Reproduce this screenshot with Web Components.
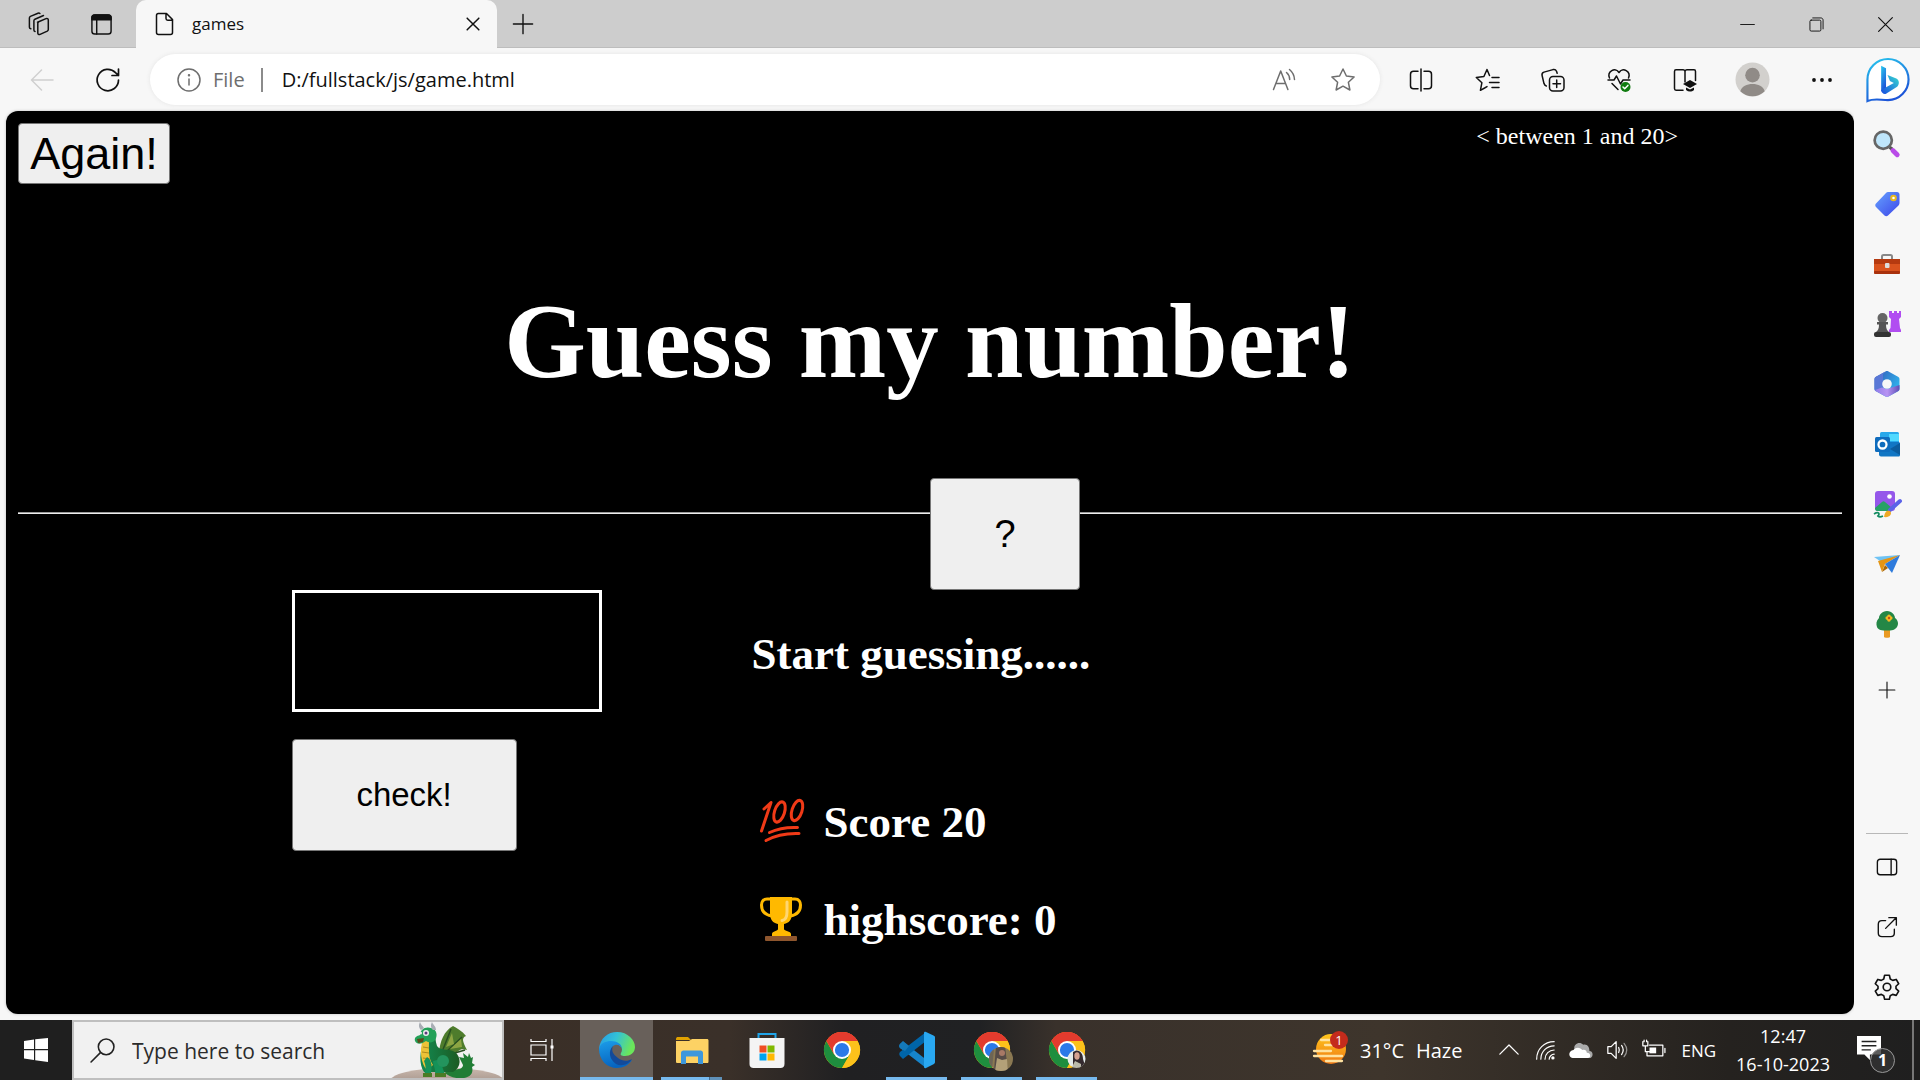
<!DOCTYPE html>
<html lang="en">
<head>
<meta charset="utf-8">
<title>games</title>
<style>
html, body { margin: 0; height: 100%; }
body { font-family: "Open Sans", "Noto Sans", sans-serif; background: #f7f7f7; color: #111; }
</style>
</head>
<body>
<desktop-screen></desktop-screen>
<script>
const line = (body, extra = '') => `<svg viewBox="0 0 24 24" fill="none" stroke="currentColor" stroke-width="1.5" stroke-linecap="round" stroke-linejoin="round" ${extra}>${body}</svg>`;
const art = (body, box = '0 0 36 36') => `<svg viewBox="${box}">${body}</svg>`;

const chrome = `
  <circle cx="18" cy="18" r="18" fill="#fbbc04"/>
  <path d="M18 18 2.4 9A18 18 0 0 1 33.6 9Z" fill="#e33b2e"/>
  <path d="M2.4 9A18 18 0 0 0 18 36L25.8 22.5 10.2 22.5Z" fill="#1e8e3e"/>
  <path d="M18 9H33.6A18 18 0 0 1 18 36L25.8 22.5Z" fill="#fcc21b"/>
  <path d="M2.4 9A18 18 0 0 1 33.6 9H18L10.2 22.5Z" fill="#e33b2e"/>
  <circle cx="18" cy="18" r="9" fill="#fff"/><circle cx="18" cy="18" r="7.1" fill="#2b79e8"/>`;

const ICONS = {
  workspaces: line('<path d="M10.5 10.2 19 6.600c1-.4 2.300.1 2.300 1.400v9.500c0 .7-.4 1.300-1 1.600l-7.200 3.300c-1.200.5-2.300-.2-2.300-1.400v-9.500c0-.6.2-1 .7-1.300M8 19.500c-.7-.1-1.100-.7-1.100-1.400V8.800c0-.7.4-1.300 1-1.600L16.500 3.500M3.800 16.800C3 16.600 2.400 16 2.400 15.200V6c0-.7.4-1.300 1-1.600L11 1.200c.7-.3 1.400-.2 1.900.3"/>'),
  tabs: line('<rect x="2" y="2" width="20" height="20" rx="3"/><path d="M2 5c0-2 1-3 3-3h14c2 0 3 1 3 3v2H2z" fill="currentColor"/><path d="M7 7v15"/>'),
  page: line('<path d="M5 1.500h8.500l6 6v13c0 1-.8 2-2 2h-12c-1 0-2-.8-2-2v-17c0-1.200.8-2 2-2M13 1.500v5c0 1 .7 1.700 1.700 1.700h5"/>'),
  close: line('<path d="m5 5 14 14m0-14-14 14" stroke-width="1.800"/>'),
  plus: line('<path d="M12 1.500v21M1.500 12h21"/>'),
  back: line('<path d="M23 12H1.500M11.500 2 1.500 12l10 10"/>'),
  reload: line('<path d="M22.500 12A10.700 10.700 0 1 1 19.500 4.600L22.500 7.500M22.500 1v6.500h-6.500" stroke-width="1.7"/>'),
  info: line('<circle cx="12" cy="12" r="11"/><path d="M12 11v6"/><circle cx="12" cy="7.300" r=".5" fill="currentColor"/>'),
  aloud: line('<path d="M1.500 21.500 8.700 3l7.200 18.500M4 15.500h9.500M14.500 4.500a9 9 0 0 1 3.200 7M17.500 1.500a14 14 0 0 1 5 10"/>'),
  star: line('<path d="m12 1 3.400 7 7.700 1-5.700 5.300 1.500 7.700-6.900-3.800L5.100 22l1.500-7.700L.9 9l7.700-1z"/>'),
  split: line('<path d="M12 1v22M9 3.200H4.500c-1.700 0-3 1.300-3 3v11.600c0 1.700 1.300 3 3 3H9M15 3.200h4.500c1.700 0 3 1.300 3 3v11.600c0 1.700-1.300 3-3 3H15"/>'),
  favs: line('<path d="M14.500 7.500 12 1.500 8.900 8.500 1.300 9.500l5.600 5.200-1.500 7.600 4.200-2.300 2.400-1.400M17 9.500h7M14.500 14.500H24M17 19.500h7"/>'),
  collections: line('<rect x="8.500" y="8.500" width="14.500" height="14.500" rx="3.500"/><path d="M15.700 12v7.500M12 15.700h7.500M5.300 18C4 17.700 3.400 16.800 3 15.600L1.100 7.500C.7 5.800 1.600 4.500 3 4.100L12 1.600c1.600-.4 2.900.3 3.500 1.600l.7 2"/>'),
  heart: line('<path d="M2.500 10C-.2 3.500 8.200-1.500 12 4.500 15.800-1.500 24.200 3.500 21.500 10M1 12h6l2.500-4 4 8 2.500-4h7M5 15.500l6 6"/><circle cx="18.500" cy="19" r="5" fill="#107c10" stroke="none"/><path d="m16 19 1.700 1.700 3.200-3.300" stroke="#fff"/>'),
  reading: line('<path d="M12 3.500c0-1-.8-1.700-2-1.700H3C2 1.800 1.500 2.500 1.500 3.500v17c0 1 .5 1.700 1.500 1.700h7M12 3.500c0-1 .8-1.700 2-1.700h7c1 0 1.500.7 1.500 1.700v9M12 3.500V14"/><path d="m10 16 7-4 7 4-7 4zM13 19.500v2.500c2.500 2 5.500 2 8 0v-2.500l-4 2z" fill="currentColor" stroke="none"/>'),
  avatar: art('<circle cx="18" cy="18" r="17.500" fill="#d2d0cd"/><circle cx="18" cy="13.500" r="7.500" fill="#908b87"/><path d="M5.500 30C8 20 28 20 30.500 30A17.500 17.500 0 0 1 5.500 30" fill="#908b87"/>'),
  dots: art('<g fill="currentColor"><circle cx="4" cy="12" r="1.900"/><circle cx="12" cy="12" r="1.900"/><circle cx="20" cy="12" r="1.900"/></g>', '0 0 24 24'),
  bing: art('<defs><linearGradient id="a" x1="0" y1="0" x2=".4" y2="1"><stop stop-color="#28c8ee"/><stop offset="1" stop-color="#1c55d8"/></linearGradient><linearGradient id="b" x1="0" y1="1" x2="1" y2="0"><stop stop-color="#174be0"/><stop offset="1" stop-color="#38dcd0"/></linearGradient></defs><path d="M2 45V23A21 21 0 1 1 23 44C15 44 9 42 2 45Z" fill="#fff" stroke="url(#a)" stroke-width="2.200"/><path d="m16 9 5 2.500v21L16 35z" fill="url(#a)"/><path d="m21 31 8-4.500-4-2-2.500-6 9 3.500c3.500 1.500 3.500 7 0 9L21 37.500c-2 1-5-1-5-3.500z" fill="url(#b)"/>', '0 0 46 47'),
  minimise: line('<path d="M1 12h22"/>'),
  restore: line('<rect x="1.500" y="5" width="17.500" height="17.500" rx="2"/><path d="M6 1.500h13c2 0 3.500 1.500 3.500 3.500v14"/>'),
  quit: line('<path d="m1 1 22 22m0-22L1 23" stroke-width="1.900"/>'),
  search: art('<circle cx="10.500" cy="10.500" r="8" fill="#bfe6fb" stroke="#666" stroke-width="2.500"/><path d="m16.500 17 2.500 2" stroke="#555" stroke-width="3"/><path d="m19.500 20 4 4" stroke="#b94be8" stroke-width="4.500" stroke-linecap="round"/>', '1 1 26 26'),
  tag: art('<defs><linearGradient id="a" x2="1" y2="1"><stop stop-color="#66a2ff"/><stop offset="1" stop-color="#3c45e8"/></linearGradient></defs><path d="M15 2h9c1.500 0 2.500 1 2.500 2.500V13c0 1-.3 1.700-1 2.400L15 25.500c-1 1-2.500 1-3.500 0L3 17c-1-1-1-2.500 0-3.500L13 3c.5-.6 1.200-1 2-1" fill="url(#a)"/><circle cx="20.500" cy="8" r="2.300" fill="#fff" stroke="#e9b91f" stroke-width="2"/>', '0 0 28 28'),
  toolbox: art('<path d="M9 8V5.500C9 4.500 9.700 4 10.500 4h7c1 0 1.500.6 1.500 1.500V8" fill="none" stroke="#888" stroke-width="2"/><rect x="1" y="8" width="26" height="15" rx="2" fill="#d9531e"/><path d="M1 8h26v5H1z" fill="#b53a10"/><rect x="1" y="20" width="26" height="3" rx="1" fill="#a9310d"/><rect x="12" y="12" width="4.500" height="5" rx="1" fill="#ddd"/>', '0 -1 28 28'),
  chess: art('<path d="M16 1h3v2h2V1h3v2h2V1h2v6l-2 2 1 9 1 2v2H16v-2l1.500-2L18 9l-2-2z" fill="#b14df1"/><circle cx="9.500" cy="8" r="5" fill="#666"/><path d="M4 12h11v2.500h-2c0 4 1 6 3 7.500H3c2-1.500 3-3.500 3-7.500H4z" fill="#555"/><rect x="1" y="22" width="17" height="5" rx="2" fill="#333"/>', '0 0 28 28'),
  office: art('<defs><linearGradient id="a" x2="1" y2=".6"><stop stop-color="#3656b5"/><stop offset="1" stop-color="#2eb5ee"/></linearGradient><linearGradient id="b" x2="1"><stop stop-color="#8f7ce8"/><stop offset=".5" stop-color="#b893f3"/><stop offset="1" stop-color="#5d4fb7"/></linearGradient></defs><path d="M12.500 1.500c1-.6 2-.6 3 0l9.500 5.200c1 .6 1.500 1.400 1.500 2.500v9.600c0 1.100-.5 2-1.500 2.500l-9.500 5.200c-1 .6-2 .6-3 0L3 21.300c-1-.6-1.500-1.400-1.500-2.500V9.200C1.500 8.100 2 7.300 3 6.700z" fill="url(#a)"/><path d="M12.500 1.500 10 4v14l-7 3.300c-1-.6-1.500-1.400-1.500-2.500V9.200C1.500 8.100 2 7.300 3 6.700z" fill="#5a78d6"/><path d="m2 20 7-2.500 5 1.500 12.500-4v3.800c0 1.100-.5 2-1.500 2.500l-9.500 5.200c-1 .6-2 .6-3 0L3 21.300z" fill="url(#b)"/><circle cx="14" cy="14" r="4.800" fill="#f7f7f7"/>', '0 0 28 28'),
  outlook: art('<rect x="7" y="2" width="19" height="15" rx="1.500" fill="#28a8ea"/><path d="M16 4h10v7H16z" fill="#50d9ff"/><path d="M6 12h20l1 1v12c0 1-.7 1.500-1.500 1.500H8c-1 0-2-.8-2-2z" fill="#1176c4"/><path d="m27 13-10 6 10 6z" fill="#0b5c9e"/><rect x="2" y="7" width="15" height="15" rx="1.500" fill="#0f6cbd"/><circle cx="9.500" cy="14.500" r="4" fill="none" stroke="#fff" stroke-width="2.300"/>', '0 0 28 28'),
  paint: art('<rect x="2" y="1" width="20" height="20" rx="3" fill="#9557ea"/><path d="m2 18 7-6c1-1 2-1 3 0l7 6v3H4c-1 0-2-1-2-3" fill="#27a266"/><circle cx="16.500" cy="6.500" r="2.300" fill="#fff"/><path d="m17 20 10-9" stroke="#5b62e8" stroke-width="4" stroke-linecap="round"/><path d="M11 27c1-6 3-7 6-6 3 3-1 7-6 6" fill="#efaa26"/><path d="M1 24c5-3 6 0 4 2 1 1 3 1 5 0" fill="none" stroke="#158c62" stroke-width="1.800"/>', '0 0 28 28'),
  plane: art('<path d="m1 7 26-2-17 8z" fill="#6fc3f4"/><path d="m5 11 22-6-15 9-3 8z" fill="#e59514"/><path d="m12 14 15-9-8 18z" fill="#2e7bdc"/><path d="m9 22 3-7 3 3z" fill="#a96604"/>', '0 0 28 28'),
  tree: art('<path d="M11 18h6v9c0 1-6 1-6 0z" fill="#e99a23"/><path d="M14 1c5 0 8 4 8 7 3 2 4 6 2 9s-5 3.500-10 3.500S5 20 4 17s-1-6 2-9c0-3 3-7 8-7" fill="#248746"/><path d="M16 4.500a1.800 1.800 0 0 1 1.800 1.800 1.800 1.800 0 1 1 0 3.600 1.800 1.800 0 1 1-3.600 0 1.800 1.800 0 1 1 0-3.600 1.800 1.800 0 0 1 1.800-1.800" fill="#f4b925"/><circle cx="16" cy="8" r="1.200" fill="#c45213"/>', '0 0 28 28'),
  panel: line('<rect x="1.500" y="3.500" width="21" height="17" rx="3"/><path d="M16.500 3.500v17"/>'),
  share: line('<path d="M10.500 5H6.500C4 5 2.500 6.500 2.500 9v9.500C2.500 21 4 22.500 6.500 22.500H16c2.500 0 4-1.500 4-4V14.500M10.500 13.500 22 2M14 1.800h8.200V10"/>'),
  gear: line('<circle cx="12" cy="12" r="3.500"/><path d="m9.800 1.200-.8 3.400-2.300 1.300L3.500 5 1.200 9l2.500 2.300v2.200L1.200 15.800l2.300 3.900 3.300-.9 2.200 1.200.8 3.300h4.400l.8-3.300 2.200-1.200 3.300.9 2.300-3.900-2.500-2.300v-2.200L22.800 9l-2.300-4-3.200.9L15 4.600l-.8-3.400z"/>'),
  hundred: art('<g fill="none" stroke="#f03a17" stroke-width="3" stroke-linecap="round" stroke-linejoin="round"><path d="M1.500 32 11 3.500 4 10"/><ellipse cx="19.500" cy="13" rx="5" ry="10.500" transform="rotate(18 19.500 13)"/><ellipse cx="37" cy="11.500" rx="5" ry="10.500" transform="rotate(18 37 11.500)"/><path d="M9.500 33.500C18 29.500 26 28 37.500 28.500M6 41.500c9-5 19-7.500 33-7"/></g>', '0 0 46 46'),
  trophy: art('<path d="M11 4H7C3 4 1.500 7 1.500 10c0 6 3.500 10 10.500 11M31 4h4c4 0 5.500 3 5.500 6 0 6-3.500 10-10.500 11" fill="none" stroke="#ffb900" stroke-width="3"/><path d="M10 2h22v16c0 7-3 10-8 11v5c0 2 7 2 7 5v3H12v-3c0-3 6-3 6-5v-5c-5-1-8-4-8-11z" fill="#ffb900"/><path d="M27 7v10c0 5-1 8-5 8.500" fill="none" stroke="#ffd670" stroke-width="3" stroke-linecap="round"/><rect x="5" y="41" width="32" height="5" rx="1" fill="#8e562e"/>', '0 2 46 46'),
  windows: art('<path d="m0 3 10-1.500V11H0zM11.200 1.300 24 0v11H11.200zM0 12.200h10V22L0 20.500zM11.200 12.200H24V24l-12.800-1.700z" fill="#fff"/>', '0 0 24 24'),
  find: line('<circle cx="15.500" cy="8.500" r="7.500"/><path d="M10 14 1 23"/>'),
  taskview: line('<path d="M1 1v2.500h15V1M1 23v-2.500h15V23M1 7h15v10H1zM22 1v22" stroke-width="1.200" stroke-linecap="butt" stroke-linejoin="miter"/><path d="M20.500 7.500h3v3h-3z" fill="currentColor" stroke="none"/>'),
  edge: art('<defs><linearGradient id="a" x2="1" y2=".3"><stop stop-color="#2599e6"/><stop offset=".5" stop-color="#32c2d8"/><stop offset="1" stop-color="#6be65b"/></linearGradient><linearGradient id="b" x2=".3" y2="1"><stop stop-color="#1c9de9"/><stop offset="1" stop-color="#0664c0"/></linearGradient></defs><path d="M0 17C1 6 9 0 18 0c11 0 18 8 18 15 0 6-5 9-10 9-4 0-5-1-4-3 3-5-1-9-6-9-7 0-12 2-16 5" fill="url(#a)"/><path d="M0 17C1 11 7 9 12 9c6 0 11 3 11 8-1-3-4-5-7-4-6 2-6 12 3 16 5 2 9 2 14-1-3 5-9 8-15 8C8 36 0 28 0 17" fill="url(#b)"/><path d="M14 14c-5 5-4 13 3 18 6 3 13 0 16-5-5 3-10 2-14-1-5-4-7-7-5-12" fill="#134a9a"/>'),
  explorer: art('<path d="M2 7c0-1.500 1-2 2-2h10l3 3H2z" fill="#e0a100"/><path d="M2 9h13l3-2h15c1 0 1.500.7 1.500 1.500v21c0 1-.5 1.500-1.500 1.500H3.500C2.500 31 2 30.500 2 29.500z" fill="#fdd264"/><path d="M7 32V21c0-1.500 1-2.500 2.500-2.500h17c1.500 0 2.500 1 2.500 2.500v11h-5v-7.500H12V32z" fill="#3c97dc"/>'),
  store: art('<path d="M9.500 10V2h17v8" fill="none" stroke="#20a4e8" stroke-width="2"/><path d="M.5 6h35v26c0 2.500-1.500 4-4 4h-27c-2.500 0-4-1.500-4-4z" fill="#f4f4f4"/><path d="M10.500 13.500h7v7h-7z" fill="#f04e23"/><path d="M18.500 13.500h7v7h-7z" fill="#80b900"/><path d="M10.500 21.500h7v7h-7z" fill="#00a3ee"/><path d="M18.500 21.500h7v7h-7z" fill="#ffb800"/>'),
  chrome: art(chrome),
  chromea: art(chrome + '<defs><clipPath id="c"><circle cx="27" cy="27" r="12"/></clipPath></defs><g clip-path="url(#c)"><path d="M14 14h26v26H14z" fill="#8a7852"/><path d="M22 14h9l3 25H20z" fill="#574c47"/><path d="m23 26 5 2 5-1 1 12H21z" fill="#b3a078"/><circle cx="28" cy="21" r="3" fill="#a87966"/><path d="M14 17h6l-2 20h-4z" fill="#6d6555"/></g>'),
  chromeb: art(chrome + '<defs><clipPath id="c"><circle cx="27.500" cy="27" r="9"/></clipPath></defs><g clip-path="url(#c)"><path d="M18 17h20v20H18z" fill="#e4ebea"/><path d="M24 20c5-4 10 0 10 7l3 10H24z" fill="#342a2e"/><ellipse cx="28" cy="24" rx="2.700" ry="3.700" fill="#d6a290"/><path d="m22 37 4-8 6 3v5z" fill="#bba"/></g>'),
  vscode: art('<path d="m1 12 3-2.500 23 18V36L1 16c-1-1-1-3 0-4" fill="#1685cc"/><path d="m1 24 3 3L27 9V0L1 20c-1 1-1 3 0 4" fill="#0065a9"/><path d="m1 12 3-3 6 5-4 5-5-3c-1-1-1-3 0-4" fill="#1479b9"/><path d="m27 0 7.500 3.500c1 .5 1.500 1 1.500 2V30c0 1-.5 1.800-1.500 2.300L27 36c-1 .5-2 0-2-1V1c0-1 1-1.500 2-1" fill="#29a8f1"/>'),
  weather: art('<defs><linearGradient id="a" x2="0" y2="1"><stop stop-color="#ffc61b"/><stop offset="1" stop-color="#f07815"/></linearGradient></defs><circle cx="19" cy="17" r="15" fill="url(#a)"/><g stroke="#ffe2a0" stroke-width="2.300" stroke-linecap="round"><path d="M9 8h10M13 13h8M2 19h17M8 24h22M2 24h5M14 29h16"/></g>'),
  caret: line('<path d="m1 17 11-11 11 11"/>'),
  wifi: line('<g stroke-width="1.400"><path d="M2 23C2 11 11 2 23 2M7 23C7 14 14 7 23 7M12 23c0-6 5-11 11-11M17 23c0-3 3-6 6-6"/></g><circle cx="21.500" cy="21.500" r="2" fill="currentColor" stroke="none"/>'),
  cloud: art('<path d="M6 11C5 5 12 2 16 6c5-1 7 3 7 7 4 0 5 6 1 8H6z" fill="#aaa"/><path d="M4 21c-5-1-5-8 1-9 3-4 8-3 10 0 4-1 5 2 5 3 5 0 5 6 1 6z" fill="#fff"/>', '0 0 27 24'),
  volume: line('<path d="M1 8h4l6-6v20l-6-6H1zM14 9c1 2 1 4 0 6M17.500 6.500c2.500 3.500 2.500 7.500 0 11"/><path d="M20.500 4c4 5 4 11 0 16" opacity=".5"/>'),
  battery: line('<path d="M9 6h16v13H6v-5M27.500 10v5M1 2v5h6V2M4 7v7h5M2.500 2V0M5.500 2V0"/><path d="M9 9h8v7H9z" fill="currentColor" stroke="none"/>', 'style="translate:-1px 0"'),
  message: art('<path d="M0 0h26v20H14v6l-6-6H0z" fill="#fff"/><path d="M5 6h16M5 10.500h16M5 15h10" stroke="#222" stroke-width="1.500"/>', '0 0 26 26'),
  dragon: art(`<defs><linearGradient id="r" x2="0" y2="1"><stop stop-color="#c9b8ad"/><stop offset="1" stop-color="#89786f"/></linearGradient><linearGradient id="g" x2="1"><stop stop-color="#128a52"/><stop offset="1" stop-color="#1c5b22"/></linearGradient></defs>
    <ellipse cx="55" cy="60" rx="58" ry="14" fill="url(#r)"/>
    <path d="M56 46c9 3 15 1 15-3l-4-8 5 1-1-5 5 4 1-4 2 5 2-1-1 6 3 2-3 2c2 7-3 11-10 11-7 1-14-2-17-5z" fill="#207d35"/>
    <path d="M47 31c1-12 5-22 14-27 4 2 9 5 13 10-5 2-3 6 1 14-6-2-10 0-13 8z" fill="#4e7c2c"/>
    <path d="m50 30 9-23M53 31l17-16M56 33l17-5" stroke="#284f21" stroke-width="1.500"/>
    <path d="m54 25 6-14 2 11zM58 27l11-10 1 8z" fill="#8da543"/>
    <path d="M33 18c-6 10-6 25-1 32h29c9-5 8-15 2-20-7-4-15-1-18-6-2-5-1-10-3-14z" fill="url(#g)"/>
    <path d="M31 18c-4 10-2 24 4 30l6-5c-5-7-4-16-4-25z" fill="#ecc237"/>
    <path d="m31 25 6 1m-7 4 7 1m-6 5 7 1m-4 5 6 1" stroke="#af8b1e"/>
    <path d="M23 19c-1-4 2-5 5-6 0-5 5-9 11-7 6 1 7 8 4 12-3 4-7 2-9 1-4 3-9 4-11 0" fill="#23a158"/>
    <path d="M29 8c-3-3-2-6-1-8 1 3 3 4 4 6M41 8c-3-3-2-6-1-8 1 3 4 4 4 8" fill="#a8adb4"/>
    <path d="m25 17 7-1-1 4-5 1z" fill="#5b4b1a"/><circle cx="34" cy="11" r="3" fill="#eee"/><circle cx="34" cy="11" r="1.500" fill="#5b367b"/><circle cx="28.500" cy="11" r="1.500" fill="#eee"/>
    <path d="M35 35c5 3 5 9 4 17h-7c3-5 1-10 0-13M45 38c5 1 5 8 8 14H43c1-4-2-9-2-13" fill="#159258"/>
    <path d="M31 51h9v4h-9zM43 51h11v4H43z" fill="#497c25"/><circle cx="51" cy="39" r="6" fill="#23945d"/>`, '0 0 110 56')
};

class Element extends HTMLElement {
  connectedCallback() {
    if (this.shadowRoot) return;
    const t = document.createElement('template');
    t.innerHTML = `<style>
      *, ::before, ::after { box-sizing: border-box; }
      button { font: inherit; color: inherit; background: none; border: 0; padding: 0; margin: 0; display: flex; align-items: center; justify-content: center; flex: none; }
      ${this.css()}</style>${this.html()}`;
    this.attachShadow({ mode: 'open' }).append(t.content.cloneNode(true));
  }
  css() { return ':host{display:block}'; }
  html() { return '<slot></slot>'; }
}
const define = (name, css, html) => customElements.define(name, class extends Element {
  css() { return css; }
  html() { return typeof html === 'function' ? html(this) : html; }
});
const btn = (label, icon, cls = '') => `<button aria-label="${label}" class="${cls}"><ui-icon name="${icon}"></ui-icon></button>`;

define('ui-icon',
  ':host{display:block;flex:none;width:var(--size,24px);height:var(--size,24px)} svg{display:block;width:100%;height:100%;overflow:visible}',
  el => ICONS[el.getAttribute('name')]);

define('tab-strip', `
  :host { display: flex; height: 48px; background: #cdcdcd; box-shadow: inset 0 -1px #bdbdbd; }
  .lead { display: flex; width: 136px; padding-left: 7px; }
  .lead button { width: 63px; }
  .tab { display: flex; align-items: center; width: 361px; padding: 0 10px 0 17px; background: #f7f7f7; border-radius: 10px 10px 0 0; font-size: 17px; }
  .tab span { flex: 1; padding: 0 0 2px 15px; }
  .tab button { width: 28px; height: 28px; --size: 20px; }
  .new { width: 51px; --size: 22px; }
  .window { display: flex; margin-left: auto; --size: 15px; }
  .window button { width: 69px; }
  .tabs { --size: 23px; }`,
  `<div class="lead">${btn('Workspaces', 'workspaces')}${btn('Tab actions', 'tabs', 'tabs')}</div>
  <div class="tab"><ui-icon name="page"></ui-icon><span>games</span>${btn('Close tab', 'close')}</div>
  ${btn('New tab', 'plus', 'new')}
  <div class="window">${btn('Minimise', 'minimise')}${btn('Restore', 'restore')}${btn('Close', 'quit')}</div>`);

define('address-bar', `
  :host { display: flex; align-items: center; height: 63px; background: #f7f7f7; }
  .nav { display: flex; width: 150px; padding-left: 9px; }
  .nav button { width: 66px; }
  .off { color: #cfcfcf; }
  .pill { flex: 1; display: flex; align-items: center; height: 51px; border-radius: 26px; background: #fff; box-shadow: 0 0 4px #e4e4e4; padding: 0 8px 0 27px; color: #6e6e6e; font-size: 20px; }
  .pill label { padding: 0 16px 0 12px; margin-right: 19px; line-height: 24px; border-right: 2px solid #8b8b8b; }
  input { flex: 1; min-width: 0; border: 0; padding: 0; outline: 0; background: none; font: inherit; color: #111; }
  .pill button { width: 59px; }
  .tools { display: flex; padding-left: 8px; }
  .tools button { width: 66px; }
  .tools .wide { width: 69px; }
  .avatar { --size: 35px; }
  .tools .bing { width: 64px; --size: 46px; }`,
  `<div class="nav">${btn('Back', 'back', 'off')}${btn('Reload', 'reload')}</div>
  <div class="pill"><ui-icon name="info"></ui-icon><label for="url">File</label><input id="url" value="D:/fullstack/js/game.html">
  ${btn('Read aloud', 'aloud')}${btn('Favourite', 'star')}</div>
  <div class="tools">${btn('Split screen', 'split')}${btn('Favourites', 'favs')}${btn('Collections', 'collections')}${btn('Browser essentials', 'heart')}${btn('Immersive reader', 'reading')}
  ${btn('Profile', 'avatar', 'wide avatar')}${btn('More', 'dots', 'wide')}${btn('Bing chat', 'bing', 'bing')}</div>`);

define('side-bar', `
  :host { display: flex; flex-direction: column; width: 66px; flex: none; padding-top: 3px; background: #f7f7f7; --size: 28px; }
  button { width: 66px; height: 60px; }
  .line { --size: 22px; }
  .add { height: 72px; --size: 18px; }
  hr { width: 42px; height: 1px; margin: auto auto 3px; border: 0; background: #b8b8b8; flex: none; }
  .last { --size: 26px; }`,
  `${[['Search', 'search'], ['Shopping', 'tag'], ['Tools', 'toolbox'], ['Games', 'chess'], ['Microsoft 365', 'office'], ['Outlook', 'outlook'], ['Image Creator', 'paint'], ['Drop', 'plane'], ['E-tree', 'tree']].map(a => btn(...a)).join('')}
  ${btn('Customise', 'plus', 'add')}<hr>${btn('Hide sidebar', 'panel', 'line')}${btn('Open link', 'share', 'line')}${btn('Settings', 'gear', 'last')}`);

define('push-button', `
  :host { display: block; }
  button { width: 100%; height: 100%; background: #efefef; border: 1px solid #767676; border-radius: 4px; color: #000; font-family: "Liberation Sans", sans-serif; }`,
  '<button><slot></slot></button>');

define('score-line', `
  :host { display: flex; align-items: center; height: 52px; padding-left: 8px; gap: 18px; --size: 46px; font: bold 45px/52px "Liberation Serif", serif; }`,
  el => `<ui-icon name="${el.getAttribute('icon')}"></ui-icon><slot></slot>`);

define('guess-game', `
  :host { display: block; flex: 1; min-width: 0; padding: 12px; background: #000; color: #fff; border-radius: 12px; font-family: "Liberation Serif", serif; box-shadow: 0 0 3px #bbb; }
  header { display: flex; justify-content: space-between; font-size: 24px; line-height: 27px; }
  header p { margin: 0 164px 0 0; }
  .again { width: 152px; height: 61px; font-size: 45px; }
  h1 { margin: 98px 0 110px; font-size: 105px; line-height: 120px; text-align: center; }
  hr { height: 2px; margin: 0; border: 0; background: linear-gradient(#9a9a9a 50%, #eee 50%); }
  .secret { position: relative; width: 150px; height: 112px; margin: -36px 0 0 50%; font-size: 38px; }
  .play { display: flex; padding-left: 15%; }
  form { display: flex; flex-direction: column; gap: 27px; width: 460px; }
  input { width: 310px; height: 122px; border: 3px solid #fff; border-radius: 0; padding: 0 20px; background: #000; color: #fff; font-size: 45px; outline: 0; }
  .check { width: 225px; height: 112px; font-size: 33px; }
  .status { padding-top: 38px; }
  .status p { margin: 0 0 116px; font: bold 45px/52px "Liberation Serif", serif; }
  score-line + score-line { margin-top: 46px; }`,
  `<header><push-button class="again">Again!</push-button><p>&lt; between 1 and 20&gt;</p></header>
  <h1>Guess my number!</h1><hr>
  <push-button class="secret">?</push-button>
  <div class="play"><form><input type="text" aria-label="Your guess"><push-button class="check">check!</push-button></form>
  <div class="status"><p>Start guessing......</p><score-line icon="hundred">Score 20</score-line><score-line icon="trophy">highscore: 0</score-line></div></div>`);

define('task-app', `
  :host { display: flex; width: 75px; justify-content: center; --size: 36px; }
  button { width: 61px; height: 60px; }
  :host([running]) button { border-bottom: 3px solid #76b9ed; padding-top: 3px; }
  :host([active]) button { width: 73px; background: #68605a; }
  :host([many]) button { border-image: linear-gradient(90deg, #76b9ed 77%, #426b8f 77% 80%, #5f91b9 80%) 1; }`,
  el => btn(el.getAttribute('label'), el.getAttribute('icon')));

define('task-bar', `
  :host { display: flex; height: 60px; flex: none; color: #fff; font-size: 20px;
    background: linear-gradient(90deg, #1f1f1f 0, #1f1f1f 4%, #3a2f27 26%, #3a3029 38%, #202022 44%, #202123 51%, #39312b 55%, #3e352c 72%, #25221f 90%, #1f1f1f 100%); }
  .start { width: 72px; }
  .search { display: flex; align-items: center; width: 432px; flex: none; padding-left: 16px; border: 2px solid #bfbfbf; background: #f1f1f1; color: #222; overflow: hidden; }
  .search ui-icon { --size: 25px; }
  .search .pic { width: 110px; height: 56px; }
  input { flex: 1; min-width: 0; border: 0; outline: 0; padding: 2px 0 0 17px; background: none; font: inherit; font-size: 21px; }
  input::placeholder { color: #2b2b2b; opacity: 1; }
  .view { width: 75px; --size: 24px; }
  .tray { display: flex; align-items: center; margin-left: auto; }
  .weather { gap: 12px; --size: 36px; position: relative; margin-right: 37px; }
  .weather i { position: absolute; left: 18px; top: -1px; width: 18px; height: 18px; border-radius: 50%; background: #c42b1c; font: 13px/18px "Open Sans", sans-serif; text-align: center; }
  .icons { display: flex; align-items: center; gap: 16px; --size: 20px; }
  .icons button:nth-child(3) { --size: 24px; margin: 0 -2px; }
  .lang { font-size: 17px; margin-left: 18px; }
  .clock { margin-left: 20px; text-align: center; font-size: 18px; line-height: 28px; display: block; }
  .note { position: relative; margin: 0 17px 0 27px; width: 38px; height: 44px; justify-content: flex-start; align-items: flex-start; padding-top: 8px; }
  .note b { position: absolute; left: 13px; top: 20px; width: 25px; height: 25px; border: 1px solid #999; border-radius: 50%; background: #333c; font-size: 16px; line-height: 23px; text-align: center; }
  .desk { width: 8px; height: 60px; border-left: 2px solid #777; }`,
  `${btn('Start', 'windows', 'start')}
  <div class="search"><ui-icon name="find"></ui-icon><input type="text" aria-label="Search" placeholder="Type here to search"><ui-icon class="pic" name="dragon"></ui-icon></div>
  ${btn('Task view', 'taskview', 'view')}
  <task-app label="Edge" icon="edge" running active></task-app><task-app label="File Explorer" icon="explorer" running many></task-app><task-app label="Store" icon="store"></task-app><task-app label="Chrome" icon="chrome"></task-app><task-app label="VS Code" icon="vscode" running></task-app><task-app label="Chrome profile 1" icon="chromea" running></task-app><task-app label="Chrome profile 2" icon="chromeb" running></task-app>
  <div class="tray"><button class="weather"><ui-icon name="weather"></ui-icon><i>1</i><span>31°C</span><span>Haze</span></button>
  <div class="icons">${btn('Hidden icons', 'caret')}${btn('Wi-Fi', 'wifi')}${btn('OneDrive', 'cloud')}${btn('Volume', 'volume')}${btn('Battery', 'battery')}</div>
  <button class="lang">ENG</button><button class="clock">12:47<br>16-10-2023</button>
  <button class="note" aria-label="Notifications"><ui-icon name="message"></ui-icon><b>1</b></button><button class="desk" aria-label="Show desktop"></button></div>`);

define('desktop-screen', `
  :host { display: flex; flex-direction: column; min-height: 100vh; background: #f7f7f7; }
  main { flex: 1; display: flex; padding: 0 0 3px 6px; }
  guess-game { margin-bottom: 3px; }`,
  '<tab-strip></tab-strip><address-bar></address-bar><main><guess-game></guess-game><side-bar></side-bar></main><task-bar></task-bar>');
</script>
</body>
</html>
